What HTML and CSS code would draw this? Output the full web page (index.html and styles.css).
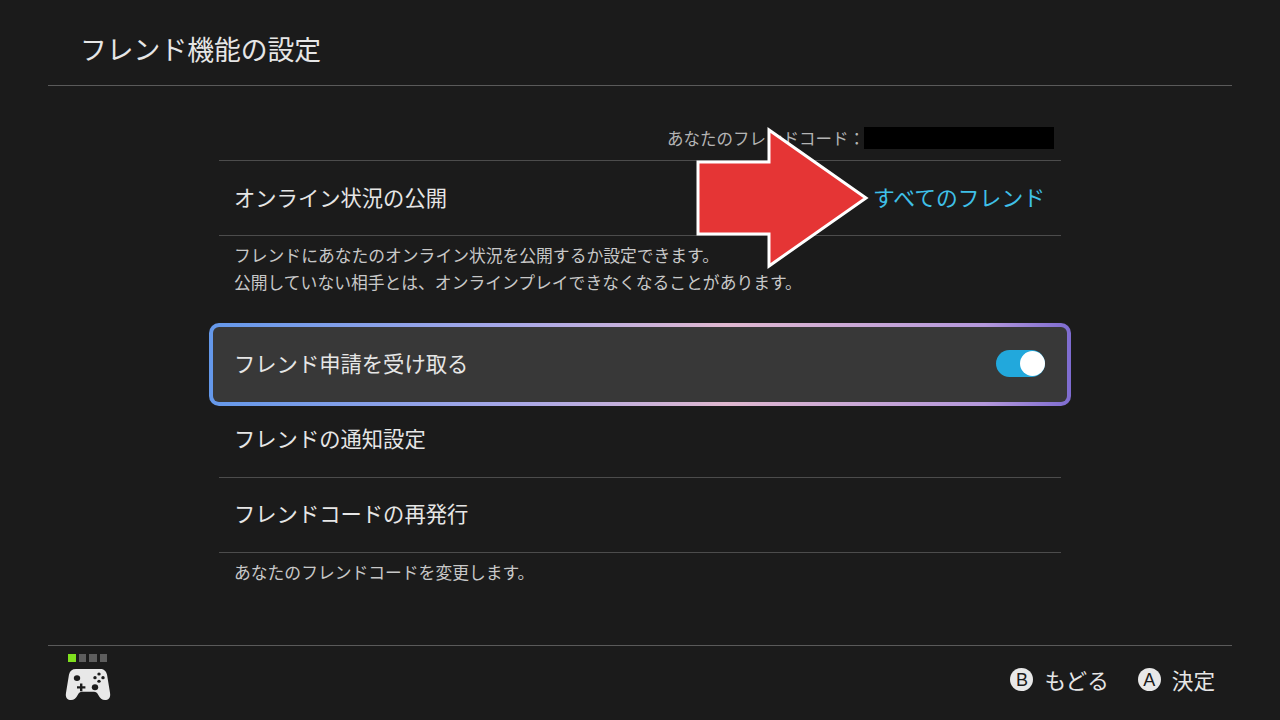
FILE: index.html
```html
<!DOCTYPE html>
<html lang="ja">
<head>
  <meta charset="UTF-8">
  <title>フレンド機能の設定</title>
  <link rel="stylesheet" href="styles.css">
</head>
<body>

  <header class="top-bar">
    <h1>フレンド機能の設定</h1>
  </header>

  <main class="settings">
    <div class="friend-code">
      <span>あなたのフレンドコード：</span>
      <span class="code-mask"></span>
    </div>

    <div class="row first-row">
      <span>オンライン状況の公開</span>
      <span class="value">すべてのフレンド</span>
    </div>
    <p class="note note-online">フレンドにあなたのオンライン状況を公開するか設定できます。<br>公開していない相手とは、オンラインプレイできなくなることがあります。</p>

    <div class="row selected">
      <span>フレンド申請を受け取る</span>
      <span class="toggle"><span class="knob"></span></span>
    </div>
    <div class="row plain">
      <span>フレンドの通知設定</span>
    </div>
    <div class="row plain">
      <span>フレンドコードの再発行</span>
    </div>
    <p class="note">あなたのフレンドコードを変更します。</p>
  </main>

  <svg class="arrow" width="176" height="142" viewBox="0 0 176 142">
    <polygon points="2,35 73,35 73,3 170,71 73,139 73,107 2,107" fill="#e53535" stroke="#fff" stroke-width="3"/>
  </svg>

  <footer class="bottom-bar">
    <div class="controller">
      <div class="player-dots">
        <span class="dot on"></span><span class="dot"></span><span class="dot"></span><span class="dot"></span>
      </div>
      <svg width="46" height="33" viewBox="0 0 46 36" preserveAspectRatio="none">
        <path d="M11 1 H35 C39 1 41 3 42 7 L45 27 C46 33 43 35 40 35 C37 35 35 33 33 29 C32 27 31 26 29 26 H17 C15 26 14 27 13 29 C11 33 9 35 6 35 C3 35 0 33 1 27 L4 7 C5 3 7 1 11 1 Z" fill="#e8e8e8"/>
        <circle cx="12" cy="11" r="3.2" fill="#1c1c1c"/>
        <path d="M15 17 h2.4 v3 h3 v2.4 h-3 v3 h-2.4 v-3 h-3 v-2.4 h3 Z" fill="#1c1c1c"/>
        <circle cx="30" cy="21" r="3.2" fill="#1c1c1c"/>
        <circle cx="34" cy="6.5" r="1.7" fill="#1c1c1c"/>
        <circle cx="30" cy="10.5" r="1.7" fill="#1c1c1c"/>
        <circle cx="38" cy="10.5" r="1.7" fill="#1c1c1c"/>
        <circle cx="34" cy="14.5" r="1.7" fill="#1c1c1c"/>
      </svg>
    </div>
    <div class="hints">
      <span class="hint"><span class="btn-icon">B</span>もどる</span>
      <span class="hint"><span class="btn-icon">A</span>決定</span>
    </div>
  </footer>

</body>
</html>
```

FILE: styles.css
```css
body {
  margin: 0;
  width: 1280px;
  height: 720px;
  overflow: hidden;
  position: relative;
  display: flex;
  flex-direction: column;
  background-color: #1b1b1b;
  color: #e6e6e6;
  font-family: "Noto Sans CJK JP", "Noto Sans", sans-serif;
}

.top-bar {
  height: 86px;
  margin: 0 48px;
  padding: 12px 0 0 32px;
  box-sizing: border-box;
  display: flex;
  align-items: center;
  border-bottom: 1px solid #5a5a5a;
}

.top-bar h1 {
  margin: 0;
  font-size: 26.8px;
  font-weight: 400;
}

.settings {
  flex: 1;
  width: 842px;
  margin: 0 auto;
  box-sizing: border-box;
}

.friend-code {
  height: 74px;
  box-sizing: border-box;
  padding: 41px 7px 0 0;
  display: flex;
  justify-content: flex-end;
  align-items: flex-start;
  font-size: 16.5px;
  line-height: 22px;
  color: #b4b4b4;
}

.code-mask {
  width: 190px;
  height: 22px;
  background-color: #000;
  margin-left: -1px;
}

.row {
  height: 75px;
  padding: 0 16px 4px 15px;
  box-sizing: border-box;
  display: flex;
  align-items: center;
  justify-content: space-between;
  font-size: 21.3px;
}

.first-row {
  border-top: 1px solid #4c4c4c;
  border-bottom: 1px solid #4c4c4c;
  height: 76px;
}

.value {
  color: #3fc0e8;
  font-size: 21.8px;
}

.note {
  margin: 0;
  padding: 6px 16px 0 15px;
  font-size: 16.8px;
  line-height: 27px;
  color: #c8c8c8;
}

.note-online {
  height: 87px;
  box-sizing: border-box;
}

.selected {
  margin: 0 -10px;
  padding: 0 22px 4px 21px;
  height: 83px;
  border: 4px solid transparent;
  border-radius: 10px;
  background:
    linear-gradient(#383838, #383838) padding-box,
    linear-gradient(90deg, #6498ea, #a8a8e8 35%, #e0b8d0 60%, #b498dc 90%, #7e6cd0) border-box;
}

.plain {
  padding-bottom: 6px;
  border-bottom: 1px solid #4c4c4c;
}

.selected + .plain {
  height: 72px;
  padding-bottom: 8px;
}

.toggle {
  width: 49px;
  height: 27px;
  margin-top: 2px;
  border-radius: 14px;
  background-color: #22a8dc;
  position: relative;
}

.knob {
  position: absolute;
  top: 1px;
  right: 0;
  width: 25px;
  height: 25px;
  border-radius: 50%;
  background-color: #fff;
}

.arrow {
  position: absolute;
  left: 696px;
  top: 127px;
}

.bottom-bar {
  height: 75px;
  margin: 0 48px;
  padding: 0 17px 7px 17px;
  box-sizing: border-box;
  display: flex;
  align-items: center;
  justify-content: space-between;
  border-top: 1px solid #5a5a5a;
}

.controller {
  display: flex;
  flex-direction: column;
  gap: 6px;
  margin-bottom: 4px;
}

.player-dots {
  display: flex;
  gap: 3px;
  padding-left: 3px;
}

.dot {
  width: 7.5px;
  height: 8px;
  background-color: #5e5e5e;
}

.dot.on {
  background-color: #7fe01e;
}

.hints {
  display: flex;
  gap: 29px;
  font-size: 21.6px;
}

.hint {
  display: flex;
  align-items: center;
  gap: 11px;
}

.btn-icon {
  width: 23px;
  height: 23px;
  border-radius: 50%;
  background-color: #e8e8e8;
  color: #1b1b1b;
  font-family: "Liberation Sans", sans-serif;
  font-size: 18px;
  line-height: 25px;
  text-align: center;
}
```
